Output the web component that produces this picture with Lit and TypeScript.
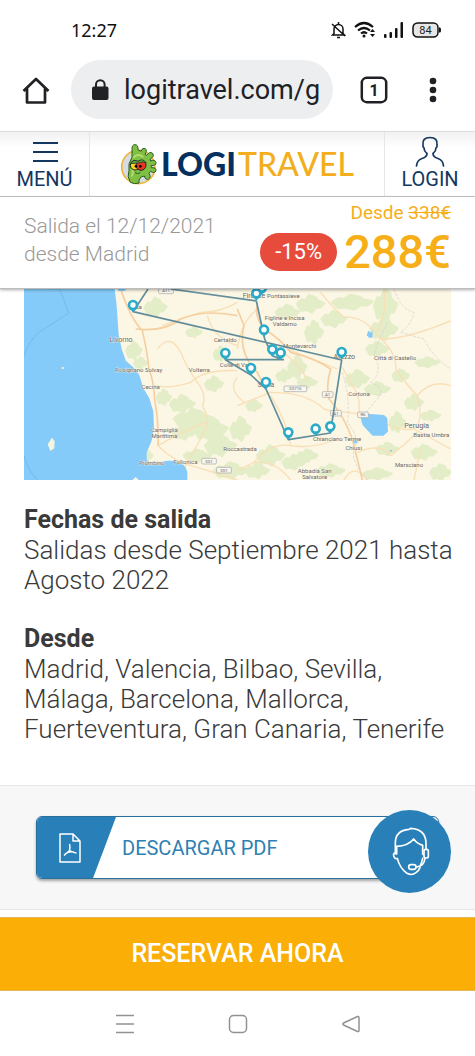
import { LitElement, html, css, svg } from "lit";
import { customElement } from "lit/decorators.js";

type Pt = [number, number];

const PINS: Pt[] = [
  [327, 70], [604, 214], [714, 18], [697, 35], [720, 144], [745, 203], [770, 213],
  [681, 259], [726, 301], [953, 211], [793, 452], [875, 441], [919, 434],
];

const TOWNS: [number, number, string, number][] = [
  [291, 158, "Livorno", 21], [344, 250, "Rosignano Solvay", 18], [380, 300, "Cecina", 18],
  [421, 429, "Campiglia", 18], [421, 447, "Marittima", 18], [384, 527, "Piombino", 18],
  [484, 525, "Follonica", 18], [526, 248, "Volterra", 18], [604, 160, "Certaldo", 18],
  [632, 234, "Colle di Val", 18], [648, 485, "Roccastrada", 18], [690, 28, "Firenze", 21],
  [778, 27, "Pontassieve", 18], [782, 94, "Figline e Incisa", 18], [782, 112, "Valdarno", 18],
  [827, 177, "Montevarchi", 18], [961, 210, "Arezzo", 21], [1113, 214, "Città di Castello", 18],
  [726, 293, "Siena", 20], [1005, 321, "Cortona", 18], [1178, 416, "Perugia", 22], [1222, 443, "Bastia Umbra", 18],
  [939, 457, "Chianciano Terme", 18], [989, 482, "Chiusi", 18], [1155, 535, "Marsciano", 18],
  [872, 552, "Abbadia San", 18], [872, 569, "Salvatore", 18], [336, 60, "Pisa", 18],
];

const SHIELDS: [number, number, string][] = [
  [426, 5, "A11"], [555, 516, "SS1"], [600, 543, "SS1"], [814, 299, "SS715"],
  [911, 316, "A1"], [936, 372, "A1"], [1017, 377, "R6"],
];

/* [centre x, centre y, radius x, radius y] of wooded patches */
const WOODS: [number, number, number, number][] = [
  [395, 55, 32, 28], [330, 185, 22, 26], [350, 222, 18, 16], [510, 130, 22, 14],
  [590, 195, 20, 22], [570, 285, 26, 22], [475, 345, 36, 26], [420, 325, 20, 22],
  [510, 390, 60, 30], [560, 420, 50, 36], [480, 430, 34, 22], [590, 470, 46, 32],
  [520, 500, 40, 18], [620, 545, 50, 24], [370, 500, 14, 16], [650, 420, 30, 36],
  [690, 350, 22, 16], [790, 70, 34, 22], [860, 45, 40, 26], [930, 90, 36, 24],
  [870, 130, 26, 34], [985, 40, 60, 22], [1085, 50, 34, 50], [1080, 120, 40, 34],
  [1060, 180, 32, 22], [820, 235, 26, 36], [780, 260, 22, 18], [850, 280, 28, 16],
  [1000, 270, 34, 26], [1060, 300, 36, 20], [1130, 260, 24, 18], [1210, 220, 34, 14],
  [1170, 340, 26, 22], [1120, 400, 22, 30], [1220, 380, 28, 14], [740, 500, 40, 30],
  [810, 520, 34, 22], [700, 545, 34, 22], [850, 500, 30, 18], [920, 545, 40, 18],
  [1200, 490, 36, 22], [1250, 550, 30, 24], [1090, 480, 32, 18], [1060, 555, 42, 16],
];

function wood([x, y, a, b]: [number, number, number, number]) {
  return `M${x - a} ${y}l${a * 0.3} ${-b * 0.5}l${a * 0.3} ${b * 0.1}l${a * 0.3} ${-b * 0.6}l${a * 0.5} ${b * 0.3}
    l${a * 0.1} ${b * 0.3}l${a * 0.5} ${b * 0.3}l${-a * 0.3} ${b * 0.5}l${-a * 0.3} ${-b * 0.05}l${-a * 0.3} ${b * 0.6}
    l${-a * 0.45} ${-b * 0.3}l${-a * 0.35} ${b * 0.1}z`;
}

@customElement("route-map")
class RouteMap extends LitElement {
  static styles = css`
    :host { display: block; }
    svg { display: block; width: 100%; height: auto; }
    text { font-family: Roboto, sans-serif; text-anchor: middle; fill: #6b6966; }
    .halo { paint-order: stroke; stroke: #fdf7e6; stroke-width: 2; }
    .woods { fill: #e3edc8; stroke: #e3edc8; stroke-width: 8; stroke-linejoin: round; }
    .road { fill: none; stroke: #f9dfb6; stroke-width: 4; stroke-linejoin: round; }
    .main { stroke: #f6cfa0; stroke-width: 5; }
    .border { fill: none; stroke: #d3cdcd; stroke-width: 2; stroke-dasharray: 9 4; }
    .route { fill: none; stroke: #628e9c; stroke-width: 5; stroke-linejoin: round; }
  `;
  render() {
    return html`
      <svg viewBox="0 0 1281 573" role="img" aria-label="Mapa del itinerario">
        <rect width="1281" height="573" fill="#fcf6e4"></rect>
        <path class="woods" d=${WOODS.map(wood).join("")}></path>
        <path class="road" d="M400 180Q440 130 470 190Q490 240 520 280Q550 320 535 350Q560 390 545 420Q520 470 500 500L480 540M390 290Q440 300 500 280Q540 240 640 245M402 470Q450 520 520 535L640 573M402 470Q470 430 545 400M415 110Q470 90 530 70Q590 70 640 40M550 80Q570 150 640 170M640 265Q610 300 660 340M640 350Q690 330 740 310Q850 310 900 360L950 375M740 320Q790 400 800 470Q740 460 690 520L640 545M700 60Q650 100 640 180M725 160Q760 170 790 200Q830 230 850 275M890 10Q930 60 960 85Q1020 80 1060 140Q1120 190 1115 240Q1150 290 1180 320Q1200 400 1170 420L1280 480M1170 420Q1110 430 1060 385Q990 370 940 368M1180 320Q1220 270 1281 290M1070 150Q1150 150 1281 95M955 235L985 290Q1010 320 1005 370M1000 490Q1070 460 1100 500Q1140 470 1180 430M1190 480L1170 573M690 520Q750 510 800 573M800 470Q870 480 940 450M960 573Q990 520 1030 573M1080 0Q1090 70 1060 130M940 240L790 180"></path>
        <path class="road main" d="M290 0Q320 90 355 125Q370 190 375 240Q390 280 392 330Q405 400 402 470M335 120Q420 130 470 90Q540 60 640 80M700 50Q690 80 720 120Q770 150 800 190Q880 210 920 240Q905 290 915 330Q960 380 985 450Q1000 510 1015 573M640 60L660 110Q640 190 700 250L730 310"></path>
        <path class="border" d="M1110 0Q1130 60 1170 70Q1160 110 1130 130L1200 150Q1230 210 1281 240M1090 100Q1060 160 1050 200Q1080 250 1040 280Q1090 300 1060 330Q1030 360 1010 400M955 250Q980 330 970 400Q1010 450 990 480Q980 520 1030 573"></path>
        <path fill="#85cbf9" d="M0 0H272L278 50 284 138 294 183 306 216 328 235 346 258 358 298 376 328 388 368 390 420 382 458 368 490 368 514 388 528 Q420 512 450 516 Q486 522 490 550 V573H0z"></path>
        <path fill="#85cbf9" d="M1008 380L1030 374 1080 378 1090 388 1092 428 1078 440 1046 440 1030 424 1016 408zM1033 125l8 6 4-8 1 22-10 2-8-8zM280 0h28l-6 6h-18zM985 452l12-2 6 10-12 4zM1095 483h10l-2 6z"></path>
        <path fill="none" stroke="#66b2e0" stroke-width="2" d="M75 0H105L115 20 134 72 104 92 46 129Q15 155 0 200M0 500Q10 540 40 573"></path>
        <path fill="#f4f5df" d="M84 446l8 10-1 22-12 8-8-20zM115 233l6 3-3 5-6-3zM325 573l10-9 10 9z"></path>
        ${SHIELDS.map(([x, y, t]) => svg`
          <rect x=${x - t.length * 6 - 4} y=${y - 8} width=${t.length * 12 + 8} height="17" rx="3" fill="#f8f6f0" stroke="#a3a3a0" stroke-width="2"></rect>
          <text x=${x} y=${y + 5} font-size="13">${t}</text>`)}
        ${TOWNS.map(([x, y, t, s]) => svg`<text class="halo" x=${x} y=${y} font-size=${s}>${t}</text>`)}
        <path class="route" d="M372 0L327 68L953 213L919 432L793 452L726 300L681 258L604 212H780M440 0L697 36L722 150L745 200L770 210"></path>
        ${PINS.map(([x, y]) => svg`
          <path fill="#2cabc8" d="M${x} ${y}q-4 -6 -12 -11h24q-8 5 -12 11z"></path>
          <circle cx=${x} cy=${y - 22} r="12" fill="#fff" stroke="#2cabc8" stroke-width="8"></circle>`)}
      </svg>`;
  }
}

@customElement("app-root")
class AppRoot extends LitElement {
  static styles = css`
    :host {
      display: flex; flex-direction: column; min-height: 100vh; background: #fff;
      font-family: Roboto, sans-serif; color: #3a3a3a;
    }
    * { box-sizing: border-box; }
    button { border: 0; padding: 0; background: none; font: inherit; color: inherit; display: flex; align-items: center; justify-content: center; }
    a { text-decoration: none; color: inherit; }
    svg { display: block; flex: none; }
    .status { display: flex; align-items: center; height: 60px; padding: 0 34px 0 71px; color: #111; }
    .clock { flex: 1; font: 18px/24px "Noto Sans", sans-serif; }
    .signals { display: flex; align-items: center; gap: 8px; }
    .browser { display: flex; align-items: center; height: 71px; padding: 0 32px 12px 20px; color: #202124; }
    .address { flex: 1; min-width: 0; display: flex; align-items: center; gap: 15px; height: 59px; margin-left: 19px; padding: 0 8px 0 21px; border-radius: 30px; background: #edeef0; }
    .address input { flex: 1; min-width: 0; border: 0; padding: 0; background: none; font: 27px/36px Roboto, sans-serif; color: #202124; }
    .tabs { margin-left: 27px; }
    .more { width: 20px; margin-left: 35px; }
    .top { display: flex; height: 66px; border-top: 1px solid #dcdcdc; border-bottom: 1px solid #c9c9c9; background: linear-gradient(#f1f1f1, #fff 16px); color: #14375f; }
    .top button { flex-direction: column; justify-content: flex-end; font-size: 20px; line-height: 24px; padding-bottom: 5px; }
    .menu { width: 89px; gap: 5px; }
    .login { width: 90px; }
    .brand { flex: 1; display: flex; align-items: center; justify-content: center; border: solid #e6e6e6; border-width: 0 1px; font-family: Lato, sans-serif; font-size: 32px; line-height: 40px; }
    .brand svg { margin-right: 4px; }
    .logi { font-weight: 900; color: #04305f; }
    .travel { font-weight: 500; color: #f2ae1c; margin-left: 2px; }
    .offer { display: flex; justify-content: space-between; height: 92px; padding: 4px 24px 0; border-bottom: 1px solid #bdbdbd; box-shadow: 0 1px 3px #0005; position: relative; }
    .trip { margin: 11px 0 0; font-size: 21px; line-height: 28px; font-weight: 300; color: #999; }
    .price { display: flex; flex-direction: column; align-items: flex-end; color: #f6ae19; }
    .before { font-size: 19px; line-height: 24px; }
    .now { display: flex; align-items: center; gap: 7px; font-weight: 500; font-size: 47px; line-height: 54px; }
    .off { display: flex; align-items: center; justify-content: center; width: 77px; height: 38px; border-radius: 19px; background: #e64b3c; color: #fff; font-size: 22px; line-height: 26px; font-weight: 400; }
    .map { margin: 0 24px; }
    .info { padding: 25px 16px 41px 24px; font-size: 26px; line-height: 30px; font-weight: 300; }
    .info h2 { margin: 0; font-size: 25px; line-height: 30px; font-weight: 700; }
    .info p { margin: 0 0 29px; }
    .info p:last-child { margin: 0; }
    .download { padding: 30px 36px; border: solid #e6e6e6; border-width: 1px 0; background: #f7f7f7; position: relative; }
    .pdf { display: flex; align-items: center; height: 63px; border: 1px solid #2b6f9b; border-radius: 6px; background: #fff; box-shadow: 0 2px 3px #0005; overflow: hidden; color: #2f7fb2; font-size: 20px; line-height: 26px; }
    .sheet { display: flex; align-items: center; width: 79px; height: 100%; padding-left: 22px; margin-right: 6px; background: #2980b9; clip-path: polygon(0 0, 100% 0, 71% 100%, 0 100%); }
    .support { position: absolute; right: 24px; top: 24px; width: 83px; height: 83px; border-radius: 50%; background: #2980b9; }
    .reserve { height: 74px; margin-top: 7px; border: solid #e2b95a; border-width: 1px 0; background: #fbae06; color: #fff; font-weight: 500; font-size: 25px; line-height: 30px; }
    .system { flex: 1; display: flex; align-items: center; justify-content: center; gap: 93px; min-height: 64px; }
  `;
  render() {
    return html`
      <div class="status">
        <time class="clock">12:27</time>
        <div class="signals">
          <svg width="15" height="18" viewBox="0 0 15 18" fill="none" stroke="#111" stroke-width="1.500"><path d="M3 12.500V8a4.500 4.500 0 0 1 9 0v4.500l1.500 1.500h-12zM7.500 1v2M6 16.500h3M1 3l13 12"/></svg>
          <svg width="22" height="18" viewBox="0 0 22 18" fill="none" stroke="#111" stroke-width="2.200"><path d="M1 6q9-8 18 0M4 9.500q6-5 12 0M7 12.500q3-2.500 6 0"/><circle cx="10" cy="15" r="1.500" fill="#111" stroke="none"/><path d="M16 11l2.500-3 2.500 3zM16 13l2.500 3 2.500-3z" fill="#111" stroke="none"/></svg>
          <svg width="20" height="16" viewBox="0 0 20 16" fill="#111"><rect y="12" width="2.500" height="4" rx="1"/><rect x="5.500" y="10" width="2.500" height="6" rx="1"/><rect x="11" y="6" width="2.500" height="10" rx="1"/><rect x="16.500" width="2.500" height="16" rx="1"/></svg>
          <svg width="29" height="16" viewBox="0 0 29 16"><rect x="1" y="1" width="25" height="14" rx="4.500" fill="#e6e6e6" stroke="#111" stroke-width="1.500"/><path d="M27 5.500h1q1 0 1 2.500t-1 2.500h-1z" fill="#111"/><text x="13.500" y="12" text-anchor="middle" font-family="Roboto" font-size="11" fill="#222">84</text></svg>
        </div>
      </div>
      <div class="browser">
        <button aria-label="Inicio"><svg width="32" height="32" viewBox="0 0 32 32" fill="none" stroke="#202124" stroke-width="2.700" stroke-linejoin="round"><path d="M3.500 17L16 5l12.500 12M7 14.500v14h18v-14"/></svg></button>
        <div class="address">
          <svg width="17" height="22" viewBox="0 0 17 22"><rect y="7.500" width="16.500" height="13.500" rx="2" fill="#202124"/><path d="M4 9V5.500a4.300 4.300 0 0 1 8.600 0V9" fill="none" stroke="#202124" stroke-width="2"/></svg>
          <input aria-label="Dirección" value="logitravel.com/g">
        </div>
        <button class="tabs" aria-label="Pestañas"><svg width="28" height="28" viewBox="0 0 28 28"><rect x="1.800" y="1.800" width="24.400" height="24.400" rx="5" fill="none" stroke="#202124" stroke-width="2.500"/><text x="14" y="19.500" text-anchor="middle" font-family="Roboto" font-weight="700" font-size="16" fill="#202124">1</text></svg></button>
        <button class="more" aria-label="Más"><svg width="8" height="26" viewBox="0 0 8 26" fill="#202124"><circle cx="4" cy="4" r="3.300"/><circle cx="4" cy="13" r="3.300"/><circle cx="4" cy="22" r="3.300"/></svg></button>
      </div>
      <header class="top">
        <button class="menu"><svg width="26" height="22" viewBox="0 0 26 22" stroke="#14375f" stroke-width="2"><path d="M1 3h25M1 12h25M1 21h25"/></svg>MENÚ</button>
        <a class="brand" href="#">
          <svg width="37" height="42" viewBox="0 0 111 126">
            <circle cx="55" cy="72" r="50" fill="#d6dce2" stroke="#f2b434" stroke-width="5"/>
            <path d="M31 118Q20 100 27 83Q23 62 36 43L36 20Q35 5 45 5Q55 5 54 20L63 25Q67 12 76 17Q82 22 75 34L80 37Q89 24 98 31Q104 40 91 48L91 54Q106 48 108 59Q108 68 93 68L94 74Q109 73 108 83Q104 93 92 85L87 91Q94 103 86 108Q77 113 73 99Q55 101 57 120Q43 125 31 118z" fill="#7fc043" stroke="#275c27" stroke-width="3" stroke-linejoin="round"/>
            <path d="M40 45Q52 28 70 42M34 101Q41 92 37 78" fill="none" stroke="#b4dc6c" stroke-width="6"/>
            <circle cx="45" cy="67" r="14" fill="#f5d51e" stroke="#222" stroke-width="3"/><circle cx="63" cy="67" r="15" fill="#e83524" stroke="#222" stroke-width="3"/>
            <path d="M32 62Q38 47 54 55Q69 44 79 60L69 57L54 60z" fill="#57a33a" stroke="#222" stroke-width="2"/>
            <circle cx="48" cy="70" r="4"/><circle cx="61" cy="70" r="4"/><path d="M45 89q8 6 16 0" fill="none" stroke="#275c27" stroke-width="3"/>
          </svg>
          <span class="logi">LOGI</span><span class="travel">TRAVEL</span>
        </a>
        <button class="login"><svg width="30" height="31" viewBox="0 0 30 31" fill="none" stroke="#14375f" stroke-width="1.700" stroke-linecap="round"><path d="M1.500 30Q2 24 7 22.500Q12 21 12 17.500Q9 15 9 12Q7.500 11 8 9Q7 1.500 15 1.500T22 9Q22.500 11 21 12Q21 15 18 17.500Q18 21 23 22.500Q28 24 28.500 30"/></svg>LOGIN</button>
      </header>
      <section class="offer">
        <p class="trip">Salida el 12/12/2021<br>desde Madrid</p>
        <div class="price">
          <div class="before">Desde <s>338€</s></div>
          <div class="now"><span class="off">-15%</span>288€</div>
        </div>
      </section>
      <route-map class="map"></route-map>
      <section class="info">
        <h2>Fechas de salida</h2>
        <p>Salidas desde Septiembre 2021 hasta Agosto 2022</p>
        <h2>Desde</h2>
        <p>Madrid, Valencia, Bilbao, Sevilla, Málaga, Barcelona, Mallorca, Fuerteventura, Gran Canaria, Tenerife</p>
      </section>
      <section class="download">
        <a class="pdf" href="#">
          <span class="sheet"><svg width="22" height="30" viewBox="0 0 22 30" fill="none" stroke="#fff" stroke-width="1.500" stroke-linejoin="round"><path d="M1 1h13l7 7v21H1zM14 1v7h7M10.500 11q1 3 0 6.500L5 22.500M10.500 17.500q3 2 7 2.500M6 21q4-3 9-2"/></svg></span>
          DESCARGAR PDF
        </a>
        <button class="support" aria-label="Atención al cliente">
          <svg width="40" height="50" viewBox="0 0 120 150" fill="none" stroke="#fff" stroke-width="5" stroke-linejoin="round" stroke-linecap="round"><path d="M16 80V48Q16 10 57 7L61 4Q107 6 108 48V67M16 80L20 81V58Q54 57 71 36Q81 50 98 55V82M16 77Q8 79 12 89Q16 98 22 94Q29 123 51 139Q65 147 78 137Q86 132 90 122M98 94Q95 108 91 115"/><rect x="102" y="67" width="13" height="26" rx="5"/><path d="M105 94Q102 119 78 120"/><rect x="56" y="113" width="22" height="14" rx="7"/></svg>
        </button>
      </section>
      <button class="reserve">RESERVAR AHORA</button>
      <nav class="system">
        <button aria-label="Recientes"><svg width="20" height="20" viewBox="0 0 20 20" stroke="#929292" stroke-width="1.500"><path d="M1 1.500h18M1 10h18M1 18.500h18"/></svg></button>
        <button aria-label="Pantalla de inicio"><svg width="20" height="20" viewBox="0 0 20 20"><rect x="1.500" y="1.500" width="17" height="17" rx="4" fill="none" stroke="#929292" stroke-width="1.500"/></svg></button>
        <button aria-label="Atrás"><svg width="20" height="20" viewBox="0 0 20 20"><path d="M16.500 2.500L2.500 9q-1.500 1 0 2l14 6.500q1.500.5 1.500-1V3.500q0-1.500-1.500-1z" fill="none" stroke="#929292" stroke-width="1.500"/></svg></button>
      </nav>`;
  }
}
